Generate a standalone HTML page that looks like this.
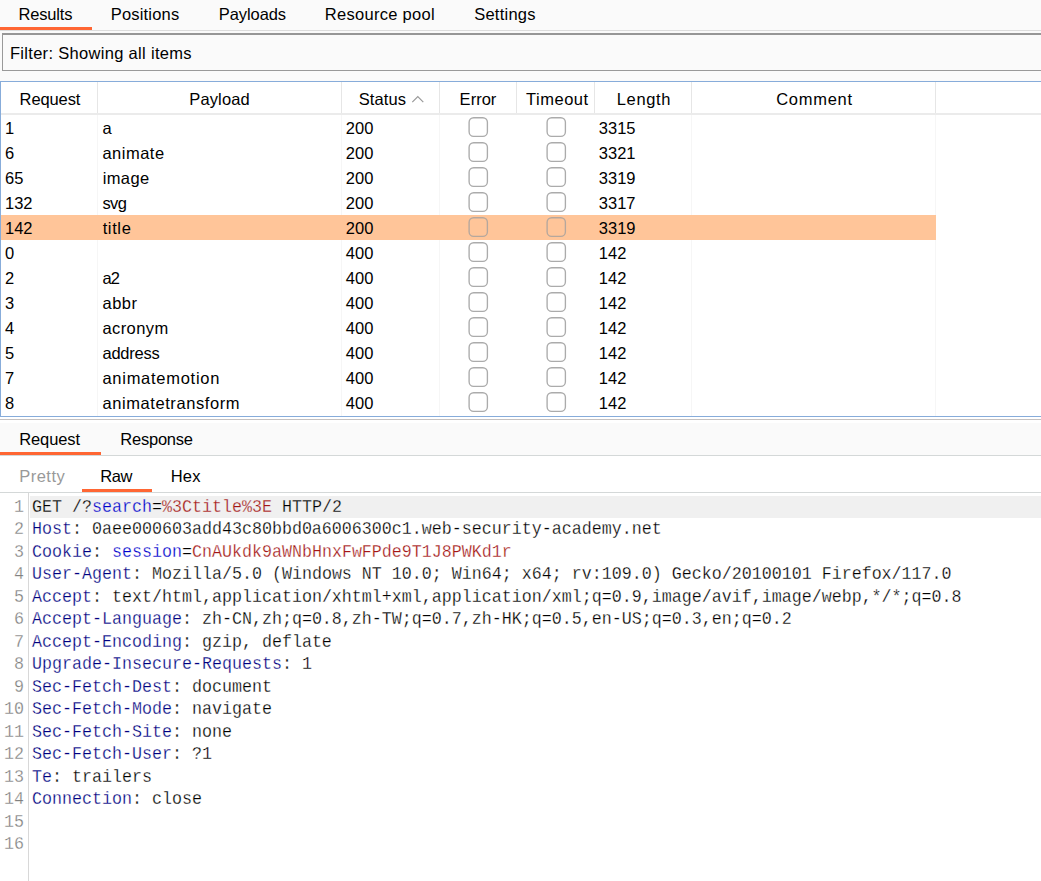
<!DOCTYPE html>
<html><head><meta charset="utf-8"><title>Intruder attack results</title>
<style>
html,body{margin:0;padding:0;}
body{width:1041px;height:881px;overflow:hidden;background:#fafafa;position:relative;font-family:"Liberation Sans",sans-serif;font-size:16.5px;color:#000;}
.t{position:absolute;white-space:nowrap;line-height:20px;height:20px;}
.hl{position:absolute;height:1px;left:0;right:0;}
.vl{position:absolute;width:1px;}
.or{position:absolute;background:#ff6633;height:3px;}
#tbl{position:absolute;left:0;top:81px;width:1041px;height:336px;background:#fff;}
.row{position:absolute;left:1px;width:935px;height:25px;}
.row span{position:absolute;top:1px;line-height:25px;white-space:nowrap;}
.cb{position:absolute;top:1px;}
.sel{background:#ffc599;}
#code{position:absolute;left:0;top:493px;width:1041px;height:388px;background:#fff;}
.ln,.cl{position:absolute;font-family:"Liberation Mono",monospace;font-size:16.67px;line-height:22px;height:22px;white-space:pre;transform:scaleY(1.12);transform-origin:0 16px;-webkit-text-stroke:0.25px #fff;}
.ln{left:0;width:24px;text-align:right;color:#808080;}
.cl{left:32px;color:#000;}
.b{color:#000080;} .p{color:#0000cc;} .r{color:#a31515;}
</style></head><body>
<div id="t1" class="t" style="left:18.55px;top:4px;letter-spacing:-0.190px;">Results</div>
<div id="t2" class="t" style="left:110.78px;top:4px;letter-spacing:0.185px;">Positions</div>
<div id="t3" class="t" style="left:218.78px;top:4px;letter-spacing:-0.082px;">Payloads</div>
<div id="t4" class="t" style="left:324.78px;top:4px;letter-spacing:0.292px;">Resource pool</div>
<div id="t5" class="t" style="left:474.24px;top:4px;letter-spacing:0.229px;">Settings</div>
<div class="hl" style="top:30px;background:#dcdcdc"></div>
<div class="or" style="left:0;top:27px;width:92px"></div>
<div style="position:absolute;left:2px;top:33px;width:1045px;height:38px;box-sizing:border-box;border:1px solid #999;border-top:2px solid #969696;background:#fafafa"></div>
<div id="flt" class="t" style="left:9.90px;top:43px;letter-spacing:0.311px;">Filter: Showing all items</div>
<div id="tbl">
<div id="h1" class="t" style="left:19.62px;top:8px;letter-spacing:-0.120px;">Request</div>
<div id="h2" class="t" style="left:189.30px;top:8px;letter-spacing:0.122px;">Payload</div>
<div id="h3" class="t" style="left:358.68px;top:8px;letter-spacing:0.123px;">Status</div>
<div id="h4" class="t" style="left:459.62px;top:8px;letter-spacing:0.016px;">Error</div>
<div id="h5" class="t" style="left:526.12px;top:8px;letter-spacing:0.492px;">Timeout</div>
<div id="h6" class="t" style="left:616.80px;top:8px;letter-spacing:0.631px;">Length</div>
<div id="h7" class="t" style="left:776.21px;top:8px;letter-spacing:0.711px;">Comment</div>
<svg style="position:absolute;left:411px;top:13px" width="14" height="10" viewBox="0 0 14 10"><path d="M1.3 8.2 L6.8 2.6 L12.3 8.2" fill="none" stroke="#9a9a9a" stroke-width="1.2"/></svg>
<div class="vl" style="left:97px;top:1px;height:32px;background:#e6e6e6"></div>
<div class="vl" style="left:97px;top:34px;height:301px;background:#f6f6f6"></div>
<div class="vl" style="left:341px;top:1px;height:32px;background:#e6e6e6"></div>
<div class="vl" style="left:341px;top:34px;height:301px;background:#f6f6f6"></div>
<div class="vl" style="left:439px;top:1px;height:32px;background:#e6e6e6"></div>
<div class="vl" style="left:439px;top:34px;height:301px;background:#f6f6f6"></div>
<div class="vl" style="left:516px;top:1px;height:32px;background:#e6e6e6"></div>
<div class="vl" style="left:594px;top:1px;height:32px;background:#e6e6e6"></div>
<div class="vl" style="left:691px;top:1px;height:32px;background:#e6e6e6"></div>
<div class="vl" style="left:691px;top:34px;height:301px;background:#f6f6f6"></div>
<div class="vl" style="left:935px;top:1px;height:32px;background:#e6e6e6"></div>
<div class="vl" style="left:935px;top:34px;height:301px;background:#f6f6f6"></div>
<div class="hl" style="top:32px;height:2px;background:#ebebeb"></div>
<div class="row" style="top:34px">
<span style="left:4px">1</span>
<span id="r0b" style="left:101.45px;">a</span>
<span style="left:344.8px">200</span>
<svg class="cb" style="left:467px" width="22" height="22" viewBox="0 0 22 22"><rect x="1.1" y="1.7" width="18.3" height="18.6" rx="4.6" fill="#fff" stroke="#ababab" stroke-width="1.35"/></svg>
<svg class="cb" style="left:544.7px" width="22" height="22" viewBox="0 0 22 22"><rect x="1.1" y="1.7" width="18.3" height="18.6" rx="4.6" fill="#fff" stroke="#ababab" stroke-width="1.35"/></svg>
<span style="left:597.8px">3315</span>
</div>
<div class="row" style="top:59px">
<span style="left:4px">6</span>
<span id="r1b" style="left:101.45px;letter-spacing:0.487px;">animate</span>
<span style="left:344.8px">200</span>
<svg class="cb" style="left:467px" width="22" height="22" viewBox="0 0 22 22"><rect x="1.1" y="1.7" width="18.3" height="18.6" rx="4.6" fill="#fff" stroke="#ababab" stroke-width="1.35"/></svg>
<svg class="cb" style="left:544.7px" width="22" height="22" viewBox="0 0 22 22"><rect x="1.1" y="1.7" width="18.3" height="18.6" rx="4.6" fill="#fff" stroke="#ababab" stroke-width="1.35"/></svg>
<span style="left:597.8px">3321</span>
</div>
<div class="row" style="top:84px">
<span style="left:4px">65</span>
<span id="r2b" style="left:101.66px;letter-spacing:0.404px;">image</span>
<span style="left:344.8px">200</span>
<svg class="cb" style="left:467px" width="22" height="22" viewBox="0 0 22 22"><rect x="1.1" y="1.7" width="18.3" height="18.6" rx="4.6" fill="#fff" stroke="#ababab" stroke-width="1.35"/></svg>
<svg class="cb" style="left:544.7px" width="22" height="22" viewBox="0 0 22 22"><rect x="1.1" y="1.7" width="18.3" height="18.6" rx="4.6" fill="#fff" stroke="#ababab" stroke-width="1.35"/></svg>
<span style="left:597.8px">3319</span>
</div>
<div class="row" style="top:109px">
<span style="left:4px">132</span>
<span id="r3b" style="left:101.49px;letter-spacing:-0.626px;">svg</span>
<span style="left:344.8px">200</span>
<svg class="cb" style="left:467px" width="22" height="22" viewBox="0 0 22 22"><rect x="1.1" y="1.7" width="18.3" height="18.6" rx="4.6" fill="#fff" stroke="#ababab" stroke-width="1.35"/></svg>
<svg class="cb" style="left:544.7px" width="22" height="22" viewBox="0 0 22 22"><rect x="1.1" y="1.7" width="18.3" height="18.6" rx="4.6" fill="#fff" stroke="#ababab" stroke-width="1.35"/></svg>
<span style="left:597.8px">3317</span>
</div>
<div class="row sel" style="top:134px">
<span style="left:4px">142</span>
<span id="r4b" style="left:101.63px;letter-spacing:0.629px;">title</span>
<span style="left:344.8px">200</span>
<svg class="cb" style="left:467px" width="22" height="22" viewBox="0 0 22 22"><rect x="1.1" y="1.7" width="18.3" height="18.6" rx="4.6" fill="none" stroke="#b5a79d" stroke-width="1.35"/></svg>
<svg class="cb" style="left:544.7px" width="22" height="22" viewBox="0 0 22 22"><rect x="1.1" y="1.7" width="18.3" height="18.6" rx="4.6" fill="none" stroke="#b5a79d" stroke-width="1.35"/></svg>
<span style="left:597.8px">3319</span>
</div>
<div class="row" style="top:159px">
<span style="left:4px">0</span>
<span style="left:344.8px">400</span>
<svg class="cb" style="left:467px" width="22" height="22" viewBox="0 0 22 22"><rect x="1.1" y="1.7" width="18.3" height="18.6" rx="4.6" fill="#fff" stroke="#ababab" stroke-width="1.35"/></svg>
<svg class="cb" style="left:544.7px" width="22" height="22" viewBox="0 0 22 22"><rect x="1.1" y="1.7" width="18.3" height="18.6" rx="4.6" fill="#fff" stroke="#ababab" stroke-width="1.35"/></svg>
<span style="left:597.8px">142</span>
</div>
<div class="row" style="top:184px">
<span style="left:4px">2</span>
<span id="r6b" style="left:101.45px;letter-spacing:-0.803px;">a2</span>
<span style="left:344.8px">400</span>
<svg class="cb" style="left:467px" width="22" height="22" viewBox="0 0 22 22"><rect x="1.1" y="1.7" width="18.3" height="18.6" rx="4.6" fill="#fff" stroke="#ababab" stroke-width="1.35"/></svg>
<svg class="cb" style="left:544.7px" width="22" height="22" viewBox="0 0 22 22"><rect x="1.1" y="1.7" width="18.3" height="18.6" rx="4.6" fill="#fff" stroke="#ababab" stroke-width="1.35"/></svg>
<span style="left:597.8px">142</span>
</div>
<div class="row" style="top:209px">
<span style="left:4px">3</span>
<span id="r7b" style="left:101.45px;letter-spacing:0.527px;">abbr</span>
<span style="left:344.8px">400</span>
<svg class="cb" style="left:467px" width="22" height="22" viewBox="0 0 22 22"><rect x="1.1" y="1.7" width="18.3" height="18.6" rx="4.6" fill="#fff" stroke="#ababab" stroke-width="1.35"/></svg>
<svg class="cb" style="left:544.7px" width="22" height="22" viewBox="0 0 22 22"><rect x="1.1" y="1.7" width="18.3" height="18.6" rx="4.6" fill="#fff" stroke="#ababab" stroke-width="1.35"/></svg>
<span style="left:597.8px">142</span>
</div>
<div class="row" style="top:234px">
<span style="left:4px">4</span>
<span id="r8b" style="left:101.45px;letter-spacing:0.404px;">acronym</span>
<span style="left:344.8px">400</span>
<svg class="cb" style="left:467px" width="22" height="22" viewBox="0 0 22 22"><rect x="1.1" y="1.7" width="18.3" height="18.6" rx="4.6" fill="#fff" stroke="#ababab" stroke-width="1.35"/></svg>
<svg class="cb" style="left:544.7px" width="22" height="22" viewBox="0 0 22 22"><rect x="1.1" y="1.7" width="18.3" height="18.6" rx="4.6" fill="#fff" stroke="#ababab" stroke-width="1.35"/></svg>
<span style="left:597.8px">142</span>
</div>
<div class="row" style="top:259px">
<span style="left:4px">5</span>
<span id="r9b" style="left:101.45px;letter-spacing:-0.231px;">address</span>
<span style="left:344.8px">400</span>
<svg class="cb" style="left:467px" width="22" height="22" viewBox="0 0 22 22"><rect x="1.1" y="1.7" width="18.3" height="18.6" rx="4.6" fill="#fff" stroke="#ababab" stroke-width="1.35"/></svg>
<svg class="cb" style="left:544.7px" width="22" height="22" viewBox="0 0 22 22"><rect x="1.1" y="1.7" width="18.3" height="18.6" rx="4.6" fill="#fff" stroke="#ababab" stroke-width="1.35"/></svg>
<span style="left:597.8px">142</span>
</div>
<div class="row" style="top:284px">
<span style="left:4px">7</span>
<span id="r10b" style="left:101.45px;letter-spacing:0.727px;">animatemotion</span>
<span style="left:344.8px">400</span>
<svg class="cb" style="left:467px" width="22" height="22" viewBox="0 0 22 22"><rect x="1.1" y="1.7" width="18.3" height="18.6" rx="4.6" fill="#fff" stroke="#ababab" stroke-width="1.35"/></svg>
<svg class="cb" style="left:544.7px" width="22" height="22" viewBox="0 0 22 22"><rect x="1.1" y="1.7" width="18.3" height="18.6" rx="4.6" fill="#fff" stroke="#ababab" stroke-width="1.35"/></svg>
<span style="left:597.8px">142</span>
</div>
<div class="row" style="top:309px">
<span style="left:4px">8</span>
<span id="r11b" style="left:101.45px;letter-spacing:0.575px;">animatetransform</span>
<span style="left:344.8px">400</span>
<svg class="cb" style="left:467px" width="22" height="22" viewBox="0 0 22 22"><rect x="1.1" y="1.7" width="18.3" height="18.6" rx="4.6" fill="#fff" stroke="#ababab" stroke-width="1.35"/></svg>
<svg class="cb" style="left:544.7px" width="22" height="22" viewBox="0 0 22 22"><rect x="1.1" y="1.7" width="18.3" height="18.6" rx="4.6" fill="#fff" stroke="#ababab" stroke-width="1.35"/></svg>
<span style="left:597.8px">142</span>
</div>
<div class="hl" style="top:0;background:#87acda"></div>
<div class="hl" style="top:335px;background:#87acda"></div>
<div class="vl" style="left:0;top:0;height:336px;background:#87acda"></div>
</div>
<div class="hl" style="top:417px;height:6px;background:#fff"></div>
<div class="hl" style="top:419px;background:#c4c1c1"></div>
<div class="hl" style="top:456px;height:37px;background:#fff"></div>
<div id="m1" class="t" style="left:19.26px;top:429px;letter-spacing:-0.115px;">Request</div>
<div id="m2" class="t" style="left:120.26px;top:429px;letter-spacing:-0.222px;">Response</div>
<div class="hl" style="top:455px;background:#d4d8d8"></div>
<div class="or" style="left:0;top:452px;width:101px"></div>
<div id="v1" class="t" style="left:19.28px;top:466px;letter-spacing:0.463px;color:#999">Pretty</div>
<div id="v2" class="t" style="left:100.36px;top:466px;letter-spacing:-0.533px;">Raw</div>
<div id="v3" class="t" style="left:170.78px;top:466px;letter-spacing:0.148px;">Hex</div>
<div class="hl" style="top:492px;background:#d4d8d8"></div>
<div class="or" style="left:82px;top:489px;width:70px"></div>
<div id="code">
<div style="position:absolute;left:30px;top:3px;width:1011px;height:22px;background:#f0f0f0"></div>
<div class="vl" style="left:28px;top:0;height:388px;background:#d8d8d8"></div>
<div class="ln" style="top:3.7px">1</div><div class="cl" style="top:3.7px;-webkit-text-stroke-color:#f0f0f0;">GET /?<span class="p">search</span>=<span class="r">%3Ctitle%3E</span> HTTP/2</div>
<div class="ln" style="top:26.2px">2</div><div class="cl" style="top:26.2px;"><span class="b">Host</span>: 0aee000603add43c80bbd0a6006300c1.web-security-academy.net</div>
<div class="ln" style="top:48.7px">3</div><div class="cl" style="top:48.7px;"><span class="b">Cookie</span>: <span class="p">session</span>=<span class="r">CnAUkdk9aWNbHnxFwFPde9T1J8PWKd1r</span></div>
<div class="ln" style="top:71.2px">4</div><div class="cl" style="top:71.2px;"><span class="b">User-Agent</span>: Mozilla/5.0 (Windows NT 10.0; Win64; x64; rv:109.0) Gecko/20100101 Firefox/117.0</div>
<div class="ln" style="top:93.7px">5</div><div class="cl" style="top:93.7px;"><span class="b">Accept</span>: text/html,application/xhtml+xml,application/xml;q=0.9,image/avif,image/webp,*/*;q=0.8</div>
<div class="ln" style="top:116.2px">6</div><div class="cl" style="top:116.2px;"><span class="b">Accept-Language</span>: zh-CN,zh;q=0.8,zh-TW;q=0.7,zh-HK;q=0.5,en-US;q=0.3,en;q=0.2</div>
<div class="ln" style="top:138.7px">7</div><div class="cl" style="top:138.7px;"><span class="b">Accept-Encoding</span>: gzip, deflate</div>
<div class="ln" style="top:161.2px">8</div><div class="cl" style="top:161.2px;"><span class="b">Upgrade-Insecure-Requests</span>: 1</div>
<div class="ln" style="top:183.7px">9</div><div class="cl" style="top:183.7px;"><span class="b">Sec-Fetch-Dest</span>: document</div>
<div class="ln" style="top:206.2px">10</div><div class="cl" style="top:206.2px;"><span class="b">Sec-Fetch-Mode</span>: navigate</div>
<div class="ln" style="top:228.7px">11</div><div class="cl" style="top:228.7px;"><span class="b">Sec-Fetch-Site</span>: none</div>
<div class="ln" style="top:251.2px">12</div><div class="cl" style="top:251.2px;"><span class="b">Sec-Fetch-User</span>: ?1</div>
<div class="ln" style="top:273.7px">13</div><div class="cl" style="top:273.7px;"><span class="b">Te</span>: trailers</div>
<div class="ln" style="top:296.2px">14</div><div class="cl" style="top:296.2px;"><span class="b">Connection</span>: close</div>
<div class="ln" style="top:318.7px">15</div><div class="cl" style="top:318.7px;"></div>
<div class="ln" style="top:341.2px">16</div><div class="cl" style="top:341.2px;"></div>
</div>
</body></html>
